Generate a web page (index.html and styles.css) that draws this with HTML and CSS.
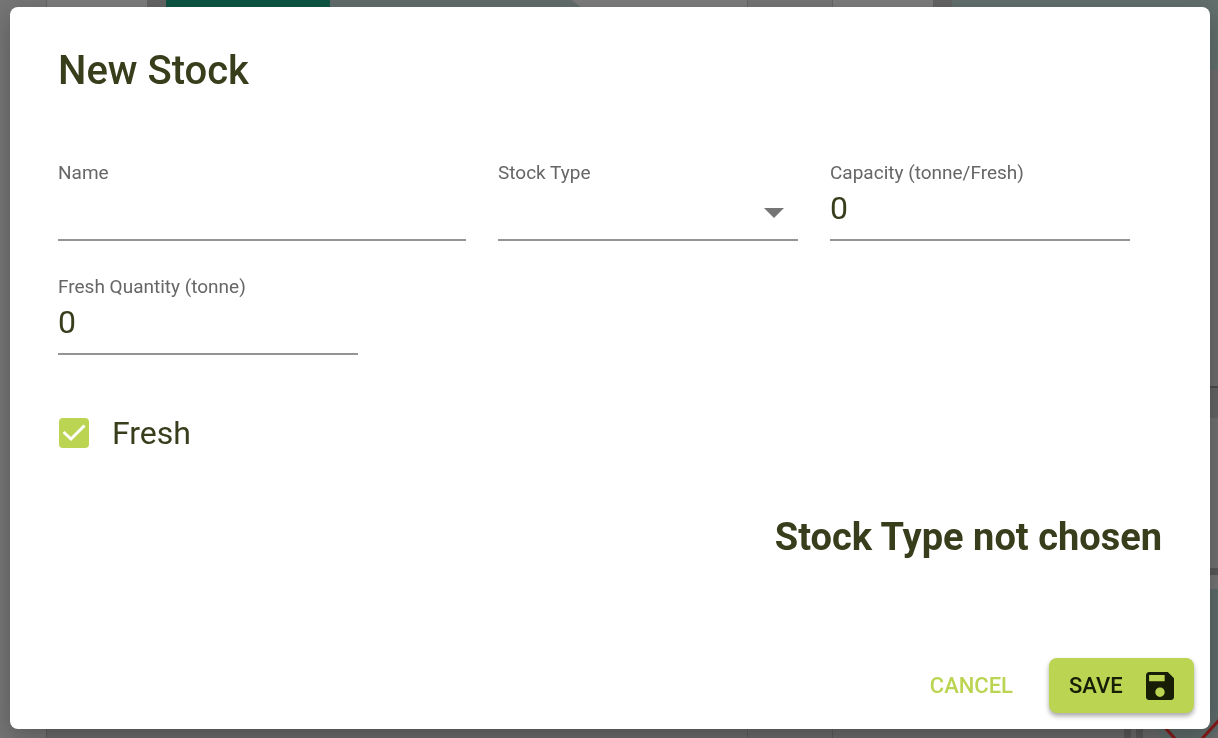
FILE: index.html
```
<!DOCTYPE html>
<html lang="en">
<head>
    <meta charset="UTF-8">
    <meta name="viewport" content="width=device-width, initial-scale=1.0">
    <title>New Stock</title>
    <link rel="stylesheet" href="styles.css">
</head>
<body>
<!-- dimmed map behind the dialog -->
<svg class="backdrop" viewBox="0 0 1218 738" preserveAspectRatio="none" aria-hidden="true">
    <rect width="1218" height="738" fill="#757575"/>
    <rect x="46" width="101" height="60" fill="#7c7c7c"/>
    <rect x="147" width="19" height="60" fill="#646464"/>
    <rect x="166" width="164" height="60" fill="#0e5544"/>
    <path d="M330 0H572L582 8V60H330z" fill="#626d6b"/>
    <path d="M572 0H747V60H582V8z" fill="#7c7c7c"/>
    <rect x="832" width="101" height="60" fill="#7c7c7c"/>
    <rect x="933" width="19" height="60" fill="#646464"/>
    <rect x="952" width="266" height="70" fill="#626f6c"/>
    <path d="M46.500 0V60M747.500 0V60M832.500 0V60" stroke="#666" fill="none"/>
    <rect x="1200" y="70" width="18" height="316" fill="#6d6d6d"/>
    <rect x="1200" y="386" width="18" height="2" fill="#4c4c4c"/>
    <rect x="1200" y="388" width="18" height="30" fill="#646464"/>
    <rect x="1200" y="418" width="18" height="150" fill="#707070"/>
    <rect x="1200" y="568" width="18" height="7" fill="#585858"/>
    <rect x="1200" y="575" width="18" height="14" fill="#747474"/>
    <rect x="46" y="700" width="1172" height="38" fill="#6a6a6a"/>
    <path d="M46.500 700V738M747.500 700V738M832.500 700V738" stroke="#5c5c5c" fill="none"/>
    <rect x="1124" y="700" width="7" height="38" fill="#585858"/>
    <rect x="1136" y="700" width="7" height="38" fill="#585858"/>
    <path d="M1200 589H1218V738H1163L1150 722z" fill="#5e6b6a"/>
    <path d="M1160 722L1178 742M1198 743L1222 717" stroke="#861a1a" stroke-width="3" fill="none"/>
    <path d="M1205 743L1223 725V743z" fill="#6a6a6a"/>
</svg>

<main class="page">
    <form class="dialog" role="dialog" aria-labelledby="dialog-title">
        <h1 class="dialog-title" id="dialog-title">New Stock</h1>

        <div class="dialog-content">
            <div class="fields">
                <div class="field field-wide">
                    <label for="name">Name</label>
                    <input type="text" id="name">
                </div>
                <div class="field">
                    <label for="stock-type">Stock Type</label>
                    <div class="select-wrap">
                        <select id="stock-type">
                            <option value=""></option>
                        </select>
                        <svg class="arrow" viewBox="0 0 20 10" aria-hidden="true"><path d="M0 0H20L10 10z" fill="currentColor"/></svg>
                    </div>
                </div>
                <div class="field">
                    <label for="capacity">Capacity (tonne/Fresh)</label>
                    <input type="text" inputmode="decimal" id="capacity" value="0">
                </div>
                <div class="field">
                    <label for="quantity">Fresh Quantity (tonne)</label>
                    <input type="text" inputmode="decimal" id="quantity" value="0">
                </div>
            </div>

            <label class="check" for="fresh">
                <input type="checkbox" id="fresh" checked>
                <span>Fresh</span>
            </label>

            <h2 class="message">Stock Type not chosen</h2>
        </div>

        <div class="dialog-actions">
            <button type="button" class="btn btn-text">CANCEL</button>
            <button type="button" class="btn btn-save">
                SAVE
                <svg class="save-icon" viewBox="3 3 18 18" aria-hidden="true"><path d="M17 3H5c-1.110 0-2 .9-2 2v14c0 1.100.89 2 2 2h14c1.100 0 2-.9 2-2V7l-4-4zm-5 16c-1.660 0-3-1.340-3-3s1.340-3 3-3 3 1.340 3 3-1.340 3-3 3zm3-10H5V5h10v4z" fill="currentColor"/></svg>
            </button>
        </div>
    </form>
</main>
</body>
</html>
```
FILE: styles.css
```
* {
    box-sizing: border-box;
}

body {
    margin: 0;
    font-family: Roboto, sans-serif;
    color: #383e1b;
    background-color: #6f6f6f;
}

.backdrop {
    position: fixed;
    top: 0;
    left: 0;
    width: 100%;
    height: 100%;
}

.page {
    position: relative;
    display: flex;
    min-height: 100vh;
    padding: 7px 8px 9px 10px;
}

.dialog {
    flex: 1;
    display: flex;
    flex-direction: column;
    background-color: #fff;
    border-radius: 8px;
    box-shadow: 0 8px 24px rgba(0, 0, 0, 0.25);
}

.dialog-title {
    margin: 0;
    padding: 32px 48px;
    font-size: 40px;
    font-weight: 500;
    line-height: 64px;
}

.dialog-content {
    flex: 1;
    padding: 24px 48px 0;
}

.fields {
    display: flex;
    flex-wrap: wrap;
    gap: 32px;
}

.field {
    flex: 0 1 300px;
    min-width: 0;
}

.field-wide {
    flex-basis: 408px;
}

.field label {
    display: block;
    font-size: 19px;
    line-height: 28px;
    color: #666;
}

.field input,
.field select {
    display: block;
    width: 100%;
    height: 54px;
    margin: 0;
    padding: 0 0 10px;
    border: none;
    border-bottom: 2px solid #949494;
    border-radius: 0;
    background: none;
    color: inherit;
    font-family: inherit;
    font-size: 32px;
    outline: none;
    appearance: none;
}

.select-wrap {
    position: relative;
}

.arrow {
    position: absolute;
    top: 21px;
    right: 14px;
    width: 20px;
    height: 10px;
    color: #757575;
    pointer-events: none;
}

.check {
    display: flex;
    align-items: center;
    gap: 23px;
    width: max-content;
    margin-top: 54px;
    font-size: 32px;
    line-height: 48px;
    cursor: pointer;
}

.check input {
    appearance: none;
    width: 30px;
    height: 30px;
    margin: 0 0 0 1px;
    border: 2px solid #bbd452;
    border-radius: 4px;
    cursor: pointer;
}

.check input:checked {
    background: #bbd452 url("data:image/svg+xml,%3Csvg xmlns='http://www.w3.org/2000/svg' viewBox='0 0 30 30'%3E%3Cpath d='M4.500 14L12 21L25.500 7.500' fill='none' stroke='white' stroke-width='3'/%3E%3C/svg%3E") center / 30px no-repeat;
}

.message {
    margin: 56px 0 0;
    font-size: 38px;
    font-weight: 700;
    line-height: 48px;
    text-align: right;
}

.dialog-actions {
    display: flex;
    justify-content: flex-end;
    gap: 16px;
    padding: 16px;
}

.btn {
    display: flex;
    align-items: center;
    height: 55px;
    padding: 0 20px;
    border: none;
    border-radius: 8px;
    font-family: inherit;
    font-size: 22px;
    font-weight: 500;
    cursor: pointer;
}

.btn-text {
    background: none;
    color: #bbd452;
}

.btn-save {
    justify-content: space-between;
    min-width: 145px;
    background-color: #bbd452;
    color: #181d05;
    box-shadow: 0 3px 5px rgba(0, 0, 0, 0.35);
}

.save-icon {
    width: 28px;
    height: 28px;
}
```
